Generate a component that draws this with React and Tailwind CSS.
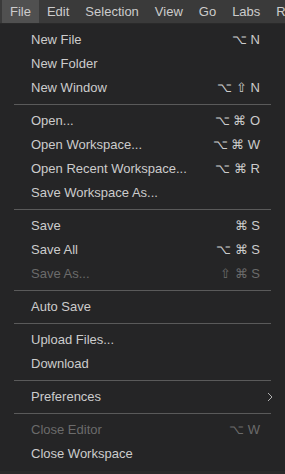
import React from "react";

const menuBar = ["File", "Edit", "Selection", "View", "Go", "Labs", "Run"];

const groups = [
  [
    { label: "New File", keys: "⌥ N" },
    { label: "New Folder" },
    { label: "New Window", keys: "⌥ ⇧ N" },
  ],
  [
    { label: "Open...", keys: "⌥ ⌘ O" },
    { label: "Open Workspace...", keys: "⌥ ⌘ W" },
    { label: "Open Recent Workspace...", keys: "⌥ ⌘ R" },
    { label: "Save Workspace As..." },
  ],
  [
    { label: "Save", keys: "⌘ S" },
    { label: "Save All", keys: "⌥ ⌘ S" },
    { label: "Save As...", keys: "⇧ ⌘ S", disabled: true },
  ],
  [{ label: "Auto Save" }],
  [{ label: "Upload Files..." }, { label: "Download" }],
  [{ label: "Preferences", submenu: true }],
  [
    { label: "Close Editor", keys: "⌥ W", disabled: true },
    { label: "Close Workspace" },
  ],
];

const MenuItem = ({ item }) => (
  <div
    className={`flex items-center h-6 pl-[31px] pr-[25px] text-[13px] ${
      item.disabled ? "text-[#6b6b6b]" : "text-[#cccccc]"
    }`}
  >
    <span className="flex-1">{item.label}</span>
    {item.keys && <span>{item.keys}</span>}
    {item.submenu && (
      <svg width="8" height="12" viewBox="0 0 8 12" className="-mr-[14px]">
        <path d="M2 2l4 4-4 4" stroke="#b0b0b0" strokeWidth="1" fill="none" />
      </svg>
    )}
  </div>
);

const App = () => {
  return (
    <div
      className="w-[285px] h-[474px] bg-[#2a2a2a] overflow-hidden flex flex-col"
      style={{ fontFamily: '"Liberation Sans", Arial, sans-serif' }}
    >
      <div className="flex h-[23px] bg-[#3a3a3a] text-[13px] text-[#cccccc] whitespace-nowrap pl-[2px]">
        {menuBar.map((m, i) => (
          <div
            key={m}
            className={`flex items-center px-2 ${i === 0 ? "bg-[#505050]" : ""}`}
          >
            {m}
          </div>
        ))}
      </div>
      <div className="mt-px flex-1 mb-[3px] bg-[#252526] py-1">
        {groups.map((g, gi) => (
          <div key={gi}>
            {gi > 0 && <div className="mx-[14px] my-1 h-px bg-[#5a5a5a]" />}
            {g.map((item) => (
              <MenuItem key={item.label} item={item} />
            ))}
          </div>
        ))}
      </div>
    </div>
  );
};

export default App;
